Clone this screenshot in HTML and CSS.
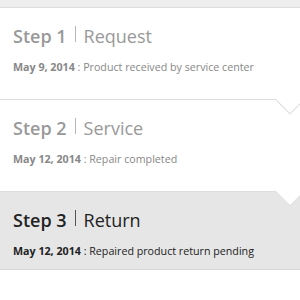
FILE: index.html
```html
<!DOCTYPE html>
<html>
<head>
<meta charset="utf-8">
<link rel="stylesheet" href="styles.css">
</head>
<body>
<div class="steps">
  <div class="top-strip"></div>
  <div class="step step-arrow">
    <div class="step-title"><span class="step-num">Step 1</span><span class="sep"></span><span class="step-name">Request</span></div>
    <div class="step-desc"><span class="step-date">May 9, 2014</span> : Product received by service center</div>
  </div>
  <div class="step step-bordered step-arrow">
    <div class="step-title"><span class="step-num">Step 2</span><span class="sep"></span><span class="step-name">Service</span></div>
    <div class="step-desc"><span class="step-date">May 12, 2014</span> : Repair completed</div>
  </div>
  <div class="step step-bordered step-current">
    <div class="step-title"><span class="step-num">Step 3</span><span class="sep"></span><span class="step-name">Return</span></div>
    <div class="step-desc"><span class="step-date">May 12, 2014</span> : Repaired product return pending</div>
  </div>
</div>
</body>
</html>
```

FILE: styles.css
```css
html, body {
  margin: 0;
  padding: 0;
  background: #ffffff;
  overflow: hidden;
}
body {
  font-family: "Open Sans", "Noto Sans", sans-serif;
  width: 300px;
  height: 300px;
}
.steps {
  width: 300px;
  display: flex;
  flex-direction: column;
}
.top-strip {
  height: 7px;
  background: #eeeeee;
  border-bottom: 1px solid #dddddd;
}
.step {
  position: relative;
  background: #ffffff;
  padding: 16px 13px 25px;
  color: #999999;
}
.step-bordered {
  border-top: 1px solid #dddddd;
}
.step-arrow::after {
  content: "";
  position: absolute;
  z-index: 2;
  width: 22px;
  height: 22px;
  box-sizing: border-box;
  right: -1px;
  bottom: -11px;
  background: #ffffff;
  border-right: 1px solid #dddddd;
  border-bottom: 1px solid #dddddd;
  transform: rotate(45deg);
}
.step-current {
  background: #e6e6e6;
  border-bottom: 1px solid #d6d6d6;
  padding-bottom: 11px;
  color: #222222;
}
.step-title {
  display: flex;
  align-items: center;
  font-size: 18px;
  line-height: 24px;
  height: 24px;
}
.step-num {
  font-weight: 600;
}
.step-name {
  font-weight: 400;
}
.sep {
  display: inline-block;
  width: 1px;
  height: 16px;
  margin: -4px 8px 0;
  background: #b5b5b5;
}
.step-current .sep {
  background: #555555;
}
.step-desc {
  margin-top: 12px;
  font-size: 10.7px;
  line-height: 14px;
  color: #888888;
}
.step-date {
  font-weight: 700;
}
.step-current .step-desc {
  color: #222222;
}
```
